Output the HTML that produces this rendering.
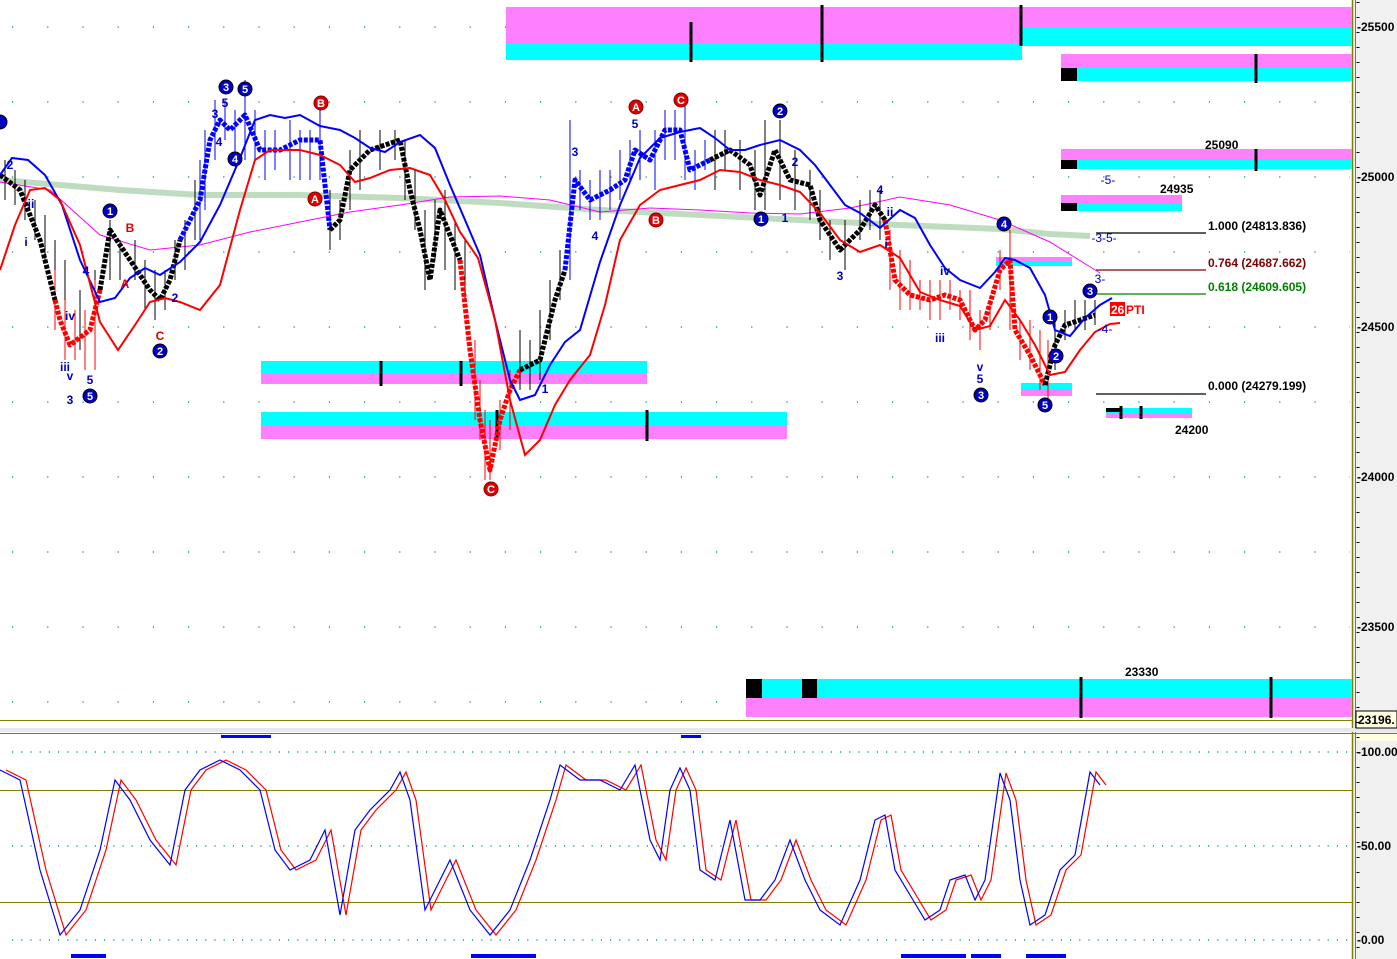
<!DOCTYPE html>
<html><head><meta charset="utf-8"><style>
html,body{margin:0;padding:0;background:#fff;}
svg{display:block;font-family:"Liberation Sans",sans-serif;}
</style></head><body>
<svg width="1397" height="959" viewBox="0 0 1397 959" xmlns="http://www.w3.org/2000/svg">
<rect width="1397" height="959" fill="#fff"/>
<rect x="1352" y="0" width="45" height="959" fill="#f0f0f0"/>
<line x1="1352.5" y1="0" x2="1352.5" y2="959" stroke="#808000" stroke-width="1.5"/>
<line x1="1355.5" y1="0" x2="1355.5" y2="959" stroke="#808000" stroke-width="1"/>
<g stroke="#008080" stroke-width="1.2" stroke-dasharray="1.2 34">
<line x1="12" y1="27" x2="1350" y2="27"/><line x1="12" y1="102" x2="1350" y2="102"/>
<line x1="12" y1="177" x2="1350" y2="177"/><line x1="12" y1="252" x2="1350" y2="252"/>
<line x1="12" y1="327" x2="1350" y2="327"/><line x1="12" y1="402" x2="1350" y2="402"/>
<line x1="12" y1="477" x2="1350" y2="477"/><line x1="12" y1="552" x2="1350" y2="552"/>
<line x1="12" y1="627" x2="1350" y2="627"/><line x1="12" y1="702" x2="1350" y2="702"/>
<line x1="12" y1="752" x2="1350" y2="752" stroke-dasharray="1.2 8"/>
<line x1="12" y1="846" x2="1350" y2="846" stroke-dasharray="1.2 8"/>
<line x1="12" y1="940" x2="1350" y2="940" stroke-dasharray="1.2 8"/>
</g>
<g>
<rect x="506" y="7" width="516" height="36" fill="#ff80ff"/><rect x="506" y="43" width="516" height="17" fill="#00ffff"/>
<rect x="1022" y="7" width="330" height="21" fill="#ff80ff"/><rect x="1022" y="28" width="330" height="18" fill="#00ffff"/>
<rect x="1061" y="54" width="291" height="14" fill="#ff80ff"/><rect x="1061" y="68" width="291" height="13" fill="#00ffff"/><rect x="1061" y="68" width="16" height="13" fill="#000"/>
<rect x="1061" y="149" width="291" height="11" fill="#ff80ff"/><rect x="1061" y="160" width="291" height="9" fill="#00ffff"/><rect x="1061" y="160" width="16" height="9" fill="#000"/>
<rect x="1061" y="195" width="121" height="8" fill="#ff80ff"/><rect x="1061" y="203" width="121" height="8" fill="#00ffff"/><rect x="1061" y="203" width="16" height="8" fill="#000"/>
<rect x="261" y="361" width="386" height="12" fill="#00ffff"/><rect x="261" y="373" width="386" height="11" fill="#ff80ff"/>
<rect x="261" y="412" width="526" height="14" fill="#00ffff"/><rect x="261" y="426" width="526" height="13" fill="#ff80ff"/>
<rect x="996" y="257" width="76" height="5" fill="#ff80ff"/><rect x="996" y="262" width="76" height="4" fill="#00ffff"/>
<rect x="1021" y="383" width="51" height="6" fill="#00ffff"/><rect x="1021" y="389" width="51" height="7" fill="#ff80ff"/>
<rect x="1106" y="408" width="86" height="5" fill="#00ffff"/><rect x="1106" y="413" width="86" height="5" fill="#ff80ff"/><rect x="1106" y="408" width="16" height="4" fill="#000"/>
<rect x="746" y="679" width="606" height="19" fill="#00ffff"/><rect x="746" y="698" width="606" height="19" fill="#ff80ff"/>
<rect x="746" y="679" width="16" height="19" fill="#000"/><rect x="802" y="679" width="15" height="19" fill="#000"/>
<g stroke="#000" stroke-width="3">
<line x1="691" y1="22" x2="691" y2="62"/><line x1="822" y1="5" x2="822" y2="62"/><line x1="1021" y1="5" x2="1021" y2="46"/>
<line x1="1256" y1="54" x2="1256" y2="83"/><line x1="1256" y1="149" x2="1256" y2="171"/>
<line x1="381" y1="361" x2="381" y2="386"/><line x1="461" y1="361" x2="461" y2="386"/>
<line x1="497" y1="410" x2="497" y2="441"/><line x1="647" y1="410" x2="647" y2="441"/>
<line x1="1081" y1="677" x2="1081" y2="718"/><line x1="1271" y1="677" x2="1271" y2="718"/>
<line x1="1121" y1="406" x2="1121" y2="419"/><line x1="1141" y1="406" x2="1141" y2="419"/>
</g>
</g>
<g font-size="12" font-weight="bold" fill="#000">
<text x="1205" y="149">25090</text><text x="1160" y="193">24935</text>
<text x="1175" y="434">24200</text><text x="1125" y="676">23330</text>
</g>
<g stroke-width="1.3">
<line x1="1096" y1="233" x2="1206" y2="233" stroke="#000"/>
<line x1="1096" y1="270" x2="1206" y2="270" stroke="#800000"/>
<line x1="1096" y1="294" x2="1206" y2="294" stroke="#008000"/>
<line x1="1096" y1="394" x2="1206" y2="394" stroke="#000"/>
</g>
<g font-size="12" font-weight="bold">
<text x="1208" y="230" fill="#000">1.000 (24813.836)</text>
<text x="1208" y="267" fill="#800000">0.764 (24687.662)</text>
<text x="1208" y="291" fill="#008000">0.618 (24609.605)</text>
<text x="1208" y="390" fill="#000">0.000 (24279.199)</text>
</g>
<polyline fill="none" stroke="#c0dcc0" stroke-width="6" points="0,180 60,185 120,190 200,195 300,195 400,198 500,203 600,210 700,215 800,220 900,225 1000,229 1050,234 1090,236"/>
<polyline fill="none" stroke="#ff00ff" stroke-width="1" points="0,182 50,190 100,235 150,250 200,245 250,232 300,222 350,212 400,205 450,197 500,196 550,200 600,212 650,208 700,210 750,213 800,214 850,208 900,197 950,205 1000,220 1050,242 1100,273"/>
<!-- candles approximation -->
<g fill="none" stroke-width="1">
<path stroke="#000" d="M5,160v40M15,170v35M25,180v40M35,200v40M45,215v45M55,240v50M65,260v40M80,290v60M95,270v80M110,220v60M120,240v40M135,240v40M145,260v50M155,270v50M165,270v40M175,240v40M185,220v50M195,180v60M330,190v60M340,200v40M350,150v60M360,130v60M380,130v40M395,130v30M405,140v60M415,170v60M425,210v80M435,200v60M445,190v80M455,220v70M465,240v60M520,330v60M530,340v50M540,310v70M550,280v60M560,250v50M715,130v60M725,130v40M740,140v50M755,150v60M765,120v90M780,120v80M795,150v60M810,170v50M820,190v50M830,220v40M845,220v50M860,200v40M870,190v40M880,190v50M1055,320v50M1065,310v30M1075,300v30M1085,300v30M1095,300v25"/>
<path stroke="#0000ff" d="M200,160v80M205,130v80M215,100v60M225,100v40M235,110v50M245,80v80M255,110v50M265,130v50M275,130v40M290,120v60M300,130v50M310,130v50M320,110v70M570,120v160M580,170v40M590,180v40M600,170v50M610,170v40M620,150v50M630,140v40M640,130v50M655,130v60M665,110v50M675,110v50M685,100v80M695,150v40M705,140v30"/>
<path stroke="#ff0000" d="M55,270v60M65,300v60M75,310v50M85,310v60M95,280v90M475,340v80M480,380v60M485,410v70M490,420v60M500,400v50M510,370v60M890,230v60M900,250v60M910,260v50M920,280v30M930,280v40M940,280v40M950,280v30M960,290v30M970,290v50M980,310v40M990,300v30M1000,250v40M1010,230v100M1020,320v40M1030,320v50M1040,330v60M1048,340v60"/>
</g>
<g fill="none" stroke-width="5" stroke-dasharray="4 1.5" stroke-linejoin="round">
<polyline stroke="#000" points="0,175 20,190 40,240 55,300"/>
<polyline stroke="#ff0000" points="55,300 60,320 70,345 90,330 100,290"/>
<polyline stroke="#000" points="100,290 110,230 130,260 150,290 160,300 170,280 180,240"/>
<polyline stroke="#0000ff" points="180,240 200,200 210,140 220,120 230,130 245,115 260,150 280,150 300,140 320,140 330,230"/>
<polyline stroke="#000" points="330,230 340,220 350,170 370,150 400,140 410,190 420,230 430,280 440,210 460,260"/>
<polyline stroke="#ff0000" points="460,260 470,350 480,420 490,470 500,420 510,390 520,370"/>
<polyline stroke="#000" points="520,370 540,360 555,300 565,270"/>
<polyline stroke="#0000ff" points="565,270 575,180 590,200 610,190 625,180 635,150 650,160 665,130 680,130 690,170 710,160"/>
<polyline stroke="#000" points="710,160 730,150 750,165 760,195 775,150 790,180 810,185 820,220 840,250 860,230 875,205 885,220"/>
<polyline stroke="#ff0000" points="885,220 895,280 910,295 930,300 945,295 960,300 975,330 985,320 1000,270 1010,260 1015,330 1030,355 1045,385"/>
<polyline stroke="#000" points="1045,385 1055,345 1065,325 1080,320 1095,315"/>
</g>
<polyline fill="none" stroke="#0000ff" stroke-width="2" points="0,175 12,158 28,160 45,175 62,205 80,260 100,302 115,298 130,278 145,268 160,275 180,262 200,242 220,205 240,158 255,120 270,115 285,118 300,115 320,126 340,130 355,138 370,148 385,152 400,142 420,135 435,148 450,185 465,220 480,255 495,320 510,380 520,400 535,395 550,365 565,342 580,330 600,262 620,205 640,158 660,138 680,132 700,128 715,138 730,150 745,150 760,145 780,140 800,150 815,165 830,185 845,205 860,213 880,228 900,210 915,218 930,245 945,268 960,280 980,288 995,272 1005,258 1015,260 1030,268 1045,295 1055,330 1070,336 1085,318 1100,305 1112,298"/>
<polyline fill="none" stroke="#ff0000" stroke-width="2" points="0,270 15,225 30,190 45,188 60,200 80,245 100,322 118,350 135,325 150,302 165,298 180,302 200,310 220,285 240,210 255,160 270,150 285,150 300,150 320,155 340,165 355,182 370,178 390,170 410,168 430,175 445,200 460,232 478,258 495,320 510,400 525,455 540,440 555,405 570,380 590,355 605,305 620,240 640,205 660,190 680,185 700,180 720,170 740,172 760,180 780,185 800,192 820,213 840,240 860,252 880,245 900,258 920,292 940,300 960,306 975,330 990,326 1005,300 1020,320 1035,345 1050,375 1065,372 1080,350 1095,332 1110,324 1120,323"/>
<g font-size="12" font-weight="bold" text-anchor="middle">
<g fill="#0000c0" stroke="#000" stroke-width="1">
<circle cx="110" cy="211" r="7"/><circle cx="160" cy="351" r="7"/><circle cx="90" cy="396" r="7"/>
<circle cx="226" cy="87" r="7"/><circle cx="245" cy="89" r="7"/><circle cx="235" cy="159" r="7"/>
<circle cx="780" cy="111" r="7"/><circle cx="761" cy="219" r="7"/><circle cx="1004" cy="224" r="7"/>
<circle cx="981" cy="395" r="7"/><circle cx="1045" cy="405" r="7"/><circle cx="1050" cy="317" r="7"/>
<circle cx="1056" cy="356" r="7"/><circle cx="1090" cy="291" r="7"/><circle cx="0" cy="122" r="7"/>
</g>
<g fill="#e00000" stroke="#800000" stroke-width="1">
<circle cx="321" cy="103" r="7"/><circle cx="315" cy="199" r="7"/><circle cx="636" cy="107" r="7"/>
<circle cx="681" cy="100" r="7"/><circle cx="656" cy="220" r="7"/><circle cx="491" cy="489" r="7"/>
</g>
<g fill="#fff" font-size="11">
<text x="110" y="215">1</text><text x="160" y="355">2</text><text x="90" y="400">5</text>
<text x="226" y="91">3</text><text x="245" y="93">5</text><text x="235" y="163">4</text>
<text x="780" y="115">2</text><text x="761" y="223">1</text><text x="1004" y="228">4</text>
<text x="981" y="399">3</text><text x="1045" y="409">5</text><text x="1050" y="321">1</text>
<text x="1056" y="360">2</text><text x="1090" y="295">3</text>
<text x="321" y="107">B</text><text x="315" y="203">A</text><text x="636" y="111">A</text>
<text x="681" y="104">C</text><text x="656" y="224">B</text><text x="491" y="493">C</text>
</g>
<g fill="#0000c0">
<text x="10" y="169">2</text><text x="31" y="208">ii</text><text x="26" y="246">i</text>
<text x="70" y="320">iv</text><text x="65" y="371">iii</text><text x="70" y="380">v</text>
<text x="90" y="384">5</text><text x="70" y="404">3</text><text x="86" y="275">4</text>
<text x="175" y="302">2</text><text x="225" y="107">5</text><text x="215" y="118">3</text><text x="219" y="146">4</text>
<text x="575" y="156">3</text><text x="635" y="128">5</text><text x="595" y="240">4</text><text x="545" y="393">1</text>
<text x="795" y="166">2</text><text x="785" y="222">1</text><text x="840" y="280">3</text><text x="880" y="194">4</text>
<text x="890" y="216">ii</text><text x="886" y="248">i</text><text x="945" y="275">iv</text><text x="940" y="342">iii</text>
<text x="980" y="371">v</text><text x="980" y="383">5</text>
<text x="1108" y="184" font-weight="normal">-5-</text><text x="1104" y="242" font-weight="normal">-3-5-</text>
<text x="1100" y="283" font-weight="normal">3-</text><text x="1105" y="333" font-weight="normal">-4-</text>
</g>
<g fill="#e00000">
<text x="130" y="232">B</text><text x="125" y="288">A</text><text x="160" y="340">C</text>
</g>
</g>
<rect x="1110" y="302" width="15" height="14" fill="#ff0000"/>
<text x="1111" y="314" font-size="12" font-weight="bold" fill="#fff">26</text>
<text x="1126" y="314" font-size="12" font-weight="bold" fill="#ff0000">PTI</text>
<line x1="0" y1="720.5" x2="1352" y2="720.5" stroke="#808000"/>
<rect x="0" y="728" width="1397" height="4" fill="#e8e8e8"/>
<line x1="0" y1="733.5" x2="1397" y2="733.5" stroke="#808000"/>
<rect x="1356" y="711" width="41" height="17" fill="#ffffe0" stroke="#000"/>
<text x="1358" y="724" font-size="12" font-weight="bold">23196.</text>
<rect x="1356" y="734" width="41" height="7" fill="#ffffe0"/>
<g font-size="12" font-weight="bold" fill="#000">
<text x="1357" y="31">-25500</text><text x="1357" y="181">-25000</text><text x="1357" y="331">-24500</text>
<text x="1357" y="481">-24000</text><text x="1357" y="631">-23500</text>
<text x="1357" y="756">-100.00</text><text x="1357" y="850">-50.00</text><text x="1357" y="944">-0.00</text>
</g>
<g stroke="#000" stroke-width="1" stroke-dasharray="1 14">
<line x1="1358" y1="2" x2="1358" y2="959" stroke-width="3"/>
</g>
<line x1="0" y1="790.5" x2="1352" y2="790.5" stroke="#808000"/>
<line x1="0" y1="902.5" x2="1352" y2="902.5" stroke="#808000"/>
<g fill="#0000ff">
<rect x="221" y="735" width="50" height="3"/><rect x="681" y="735" width="20" height="3"/>
<rect x="71" y="954" width="35" height="4"/><rect x="471" y="954" width="65" height="4"/>
<rect x="901" y="954" width="65" height="4"/><rect x="971" y="954" width="30" height="4"/><rect x="1026" y="954" width="40" height="4"/>
</g>
<polyline transform="translate(6,0)" fill="none" stroke="#ff0000" stroke-width="1.2" points="0,770 20,780 40,870 60,935 80,910 100,850 115,780 130,800 150,840 170,865 185,790 200,770 220,760 240,770 260,790 275,850 290,870 310,860 325,830 340,915 355,830 370,810 390,790 400,772 410,800 425,910 440,880 450,860 470,910 490,935 510,910 530,860 550,800 560,765 580,780 600,780 620,790 635,765 650,840 660,860 670,790 680,768 690,790 700,870 715,880 730,820 745,900 760,900 775,880 790,840 805,880 820,910 840,925 860,880 875,820 885,815 895,870 910,895 925,920 940,910 950,880 965,875 975,900 985,880 1000,773 1010,800 1020,880 1030,925 1045,915 1060,870 1075,855 1090,772 1100,785"/>
<polyline fill="none" stroke="#0000ff" stroke-width="1.2" points="0,770 20,780 40,870 60,935 80,910 100,850 115,780 130,800 150,840 170,865 185,790 200,770 220,760 240,770 260,790 275,850 290,870 310,860 325,830 340,915 355,830 370,810 390,790 400,772 410,800 425,910 440,880 450,860 470,910 490,935 510,910 530,860 550,800 560,765 580,780 600,780 620,790 635,765 650,840 660,860 670,790 680,768 690,790 700,870 715,880 730,820 745,900 760,900 775,880 790,840 805,880 820,910 840,925 860,880 875,820 885,815 895,870 910,895 925,920 940,910 950,880 965,875 975,900 985,880 1000,773 1010,800 1020,880 1030,925 1045,915 1060,870 1075,855 1090,772 1100,785"/>
</svg>
</body></html>
